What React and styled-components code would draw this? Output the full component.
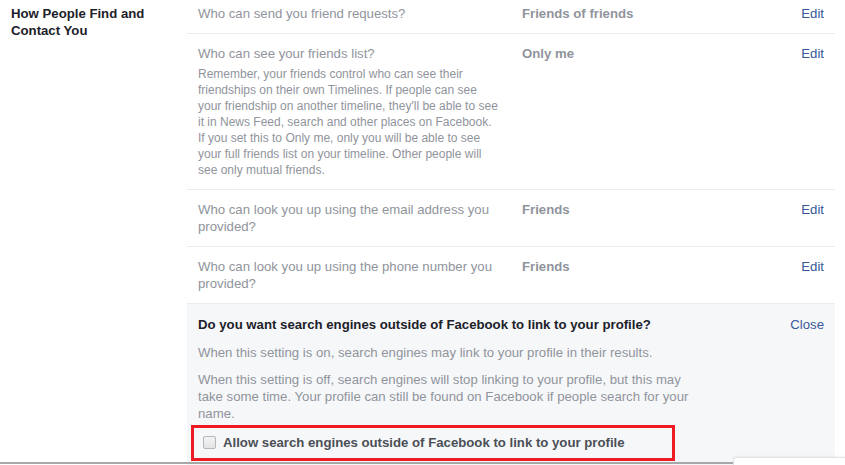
import styled, { createGlobalStyle } from 'styled-components';

const GlobalStyle = createGlobalStyle`
  html, body {
    margin: 0;
    padding: 0;
    background: #fff;
  }
  body {
    font-family: "Liberation Sans", Arial, Helvetica, sans-serif;
  }
`;

const Page = styled.div`
  position: relative;
  width: 845px;
  height: 465px;
  overflow: hidden;
`;

const Layout = styled.div`
  display: flex;
  margin-top: -6px;
`;

const Sidebar = styled.div`
  width: 187px;
  box-sizing: border-box;
  padding: 11px 30px 0 11px;
`;

const SectionTitle = styled.h2`
  margin: 0;
  font-size: 13.2px;
  line-height: 17px;
  font-weight: bold;
  color: #1d2129;
`;

const Main = styled.div`
  width: 648px;
`;

const Row = styled.div`
  display: grid;
  grid-template-columns: 324px 1fr auto;
  padding: 11px;
  border-bottom: 1px solid #e9ebee;
`;

const Label = styled.div`
  font-size: 13.2px;
  line-height: 17px;
  color: #90949c;
  max-width: 310px;
`;

const Description = styled.p`
  margin: 4px 0 0;
  width: 301px;
  font-size: 12px;
  line-height: 16px;
  color: #90949c;
`;

const Value = styled.div`
  font-size: 13.2px;
  line-height: 17px;
  font-weight: bold;
  color: #90949c;
`;

const Link = styled.a`
  font-size: 13.2px;
  line-height: 17px;
  color: #365899;
  text-decoration: none;
  cursor: pointer;
`;

const Panel = styled.div`
  background: #f6f7f9;
  padding: 12px 11px 10px;
`;

const PanelHeader = styled.div`
  display: flex;
  justify-content: space-between;
  align-items: flex-start;
`;

const PanelTitle = styled.div`
  font-size: 13.2px;
  line-height: 17px;
  font-weight: bold;
  color: #1d2129;
`;

const PanelText = styled.p`
  margin: ${(p) => (p.$first ? '11px' : '10px')} 0 0;
  width: ${(p) => (p.$narrow ? '500px' : 'auto')};
  font-size: 13.2px;
  line-height: 17px;
  color: #90949c;
`;

const Highlight = styled.label`
  display: flex;
  align-items: center;
  gap: 7px;
  width: 484px;
  box-sizing: border-box;
  margin: 3px 0 0 -7px;
  padding: 6px 9px 7px;
  border: 3px solid #ed1c24;
  cursor: pointer;
`;

const Checkbox = styled.input`
  appearance: none;
  margin: 0;
  width: 13px;
  height: 13px;
  border: 1px solid #b4b7bc;
  border-radius: 2px;
  background: linear-gradient(#f4f4f4, #e4e4e4);
  flex-shrink: 0;
`;

const CheckLabel = styled.span`
  font-size: 13.2px;
  line-height: 17px;
  font-weight: bold;
  color: #4b4f56;
`;

const BottomLine = styled.div`
  position: absolute;
  left: 0;
  bottom: 1px;
  width: 733px;
  height: 2px;
  background: #a8a8a8;
`;

const ChatTab = styled.div`
  position: absolute;
  left: 733px;
  right: 0;
  bottom: -4px;
  height: 11px;
  background: #fff;
  border-top: 1px solid #e3e4e6;
  border-left: 1px solid #e3e4e6;
  border-top-left-radius: 3px;
  box-shadow: 0 -1px 2px rgba(0, 0, 0, 0.05);
`;

const rows = [
  { label: 'Who can send you friend requests?', value: 'Friends of friends' },
  {
    label: 'Who can see your friends list?',
    value: 'Only me',
    description:
      "Remember, your friends control who can see their friendships on their own Timelines. If people can see your friendship on another timeline, they'll be able to see it in News Feed, search and other places on Facebook. If you set this to Only me, only you will be able to see your full friends list on your timeline. Other people will see only mutual friends.",
  },
  { label: 'Who can look you up using the email address you provided?', value: 'Friends' },
  { label: 'Who can look you up using the phone number you provided?', value: 'Friends' },
];

function App() {
  return (
    <Page>
      <GlobalStyle />
      <Layout>
        <Sidebar>
          <SectionTitle>How People Find and Contact You</SectionTitle>
        </Sidebar>
        <Main>
          {rows.map((row) => (
            <Row key={row.label}>
              <div>
                <Label>{row.label}</Label>
                {row.description && <Description>{row.description}</Description>}
              </div>
              <Value>{row.value}</Value>
              <Link>Edit</Link>
            </Row>
          ))}
          <Panel>
            <PanelHeader>
              <PanelTitle>Do you want search engines outside of Facebook to link to your profile?</PanelTitle>
              <Link>Close</Link>
            </PanelHeader>
            <PanelText $first>
              When this setting is on, search engines may link to your profile in their results.
            </PanelText>
            <PanelText $narrow>
              When this setting is off, search engines will stop linking to your profile, but this may take
              some time. Your profile can still be found on Facebook if people search for your name.
            </PanelText>
            <Highlight>
              <Checkbox type="checkbox" />
              <CheckLabel>Allow search engines outside of Facebook to link to your profile</CheckLabel>
            </Highlight>
          </Panel>
        </Main>
      </Layout>
      <BottomLine />
      <ChatTab />
    </Page>
  );
}

export default App;
